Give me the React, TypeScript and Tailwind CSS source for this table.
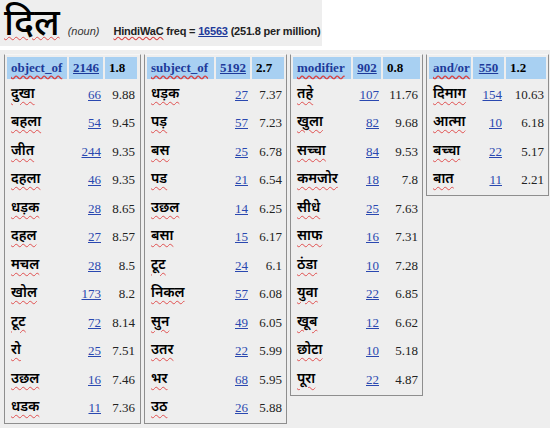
import React from 'react';

type Row = [string, number, string];
type Col = { rel: string; freq: number; score: string; width: string; cols: string; rows: Row[] };

const hindi = "'Noto Sans Devanagari','Lohit Devanagari','FreeSans','Mangal','Noto Sans',sans-serif";

const columns: Col[] = [
  {
    rel: 'object_of', freq: 2146, score: '1.8', width: 'w-[137px]', cols: 'grid-cols-[60px_34px_32px]',
    rows: [
      ['दुखा', 66, '9.88'], ['बहला', 54, '9.45'], ['जीत', 244, '9.35'], ['दहला', 46, '9.35'],
      ['धड़क', 28, '8.65'], ['दहल', 27, '8.57'], ['मचल', 28, '8.5'], ['खोल', 173, '8.2'],
      ['टूट', 72, '8.14'], ['रो', 25, '7.51'], ['उछल', 16, '7.46'], ['धडक', 11, '7.36'],
    ],
  },
  {
    rel: 'subject_of', freq: 5192, score: '2.7', width: 'w-[143px]', cols: 'grid-cols-[67px_34px_32px]',
    rows: [
      ['धड़क', 27, '7.37'], ['पड़', 57, '7.23'], ['बस', 25, '6.78'], ['पड', 21, '6.54'],
      ['उछल', 14, '6.25'], ['बसा', 15, '6.17'], ['टूट', 24, '6.1'], ['निकल', 57, '6.08'],
      ['सुन', 49, '6.05'], ['उतर', 22, '5.99'], ['भर', 68, '5.95'], ['उठ', 26, '5.88'],
    ],
  },
  {
    rel: 'modifier', freq: 902, score: '0.8', width: 'w-[133px]', cols: 'grid-cols-[58px_28px_37px]',
    rows: [
      ['तहे', 107, '11.76'], ['खुला', 82, '9.68'], ['सच्चा', 84, '9.53'], ['कमजोर', 18, '7.8'],
      ['सीधे', 25, '7.63'], ['साफ', 16, '7.31'], ['ठंडा', 10, '7.28'], ['युवा', 22, '6.85'],
      ['खूब', 12, '6.62'], ['छोटा', 10, '5.18'], ['पूरा', 22, '4.87'],
    ],
  },
  {
    rel: 'and/or', freq: 550, score: '1.2', width: 'w-[123px]', cols: 'grid-cols-[42px_31px_40px]',
    rows: [
      ['दिमाग', 154, '10.63'], ['आत्मा', 10, '6.18'], ['बच्चा', 22, '5.17'], ['बात', 11, '2.21'],
    ],
  },
];

function Panel({ col }: { col: Col }) {
  return (
    <div className={`${col.width} self-start border border-[#8e8e8e] border-t-[#f6f6f6] bg-[#eeeeee] p-[2px]`}>
      <div className={`grid ${col.cols} gap-x-[2px] gap-y-[2px] font-['Liberation_Serif',serif] text-[13px]`}>
        <div className="flex h-[22px] items-center bg-[#a8d0f2] pl-[4px] font-bold">
          <span className="text-[#1d3a9a] underline decoration-wavy decoration-[#d94040] underline-offset-2">{col.rel}</span>
        </div>
        <div className="flex h-[22px] items-center justify-center bg-[#a8d0f2] font-bold text-[#1d3a9a] underline">
          {col.freq}
        </div>
        <div className="flex h-[22px] items-center bg-[#a8d0f2] pl-[4px] font-bold text-black">{col.score}</div>
        {col.rows.map(([w, f, s], i) => (
          <React.Fragment key={i}>
            <div className="flex h-[26.5px] items-center pl-[4px]">
              <span
                style={{ fontFamily: hindi }}
                className="text-[14px] font-semibold text-black underline decoration-wavy decoration-[#e05050] decoration-1 underline-offset-[3px]"
              >
                {w}
              </span>
            </div>
            <div className="flex h-[26.5px] items-center justify-end pr-[2px] text-[#2a48b0] underline">{f}</div>
            <div className="flex h-[26.5px] items-center justify-end pr-[2px] text-[#222]">{s}</div>
          </React.Fragment>
        ))}
      </div>
    </div>
  );
}

export default function App() {
  return (
    <div className="h-[432px] w-[553px] bg-white">
      <div className="flex h-[46px] w-[322px] items-baseline whitespace-nowrap bg-[#eeeeee] pl-[4px] pt-[5px]">
        <span
          style={{ fontFamily: hindi }}
          className="text-[37px] font-medium leading-[42px] text-black underline decoration-wavy decoration-[#e05050] decoration-1 underline-offset-[1px]"
        >
          दिल
        </span>
        <span className="ml-[8px] font-['Liberation_Sans',sans-serif] text-[11px] italic text-[#333]">(noun)</span>
        <span className="ml-[14px] font-['Liberation_Sans',sans-serif] text-[11px] font-bold tracking-[-0.2px] text-[#222]">
          <span className="underline decoration-wavy decoration-[#d94040]">HindiWaC</span> freq ={' '}
          <span className="text-[#1d3a9a] underline">16563</span> (251.8 per million)
        </span>
      </div>
      <div className="mt-[4px] flex h-[378px] w-[550px] gap-[3px] bg-[#eeeeee] pl-[4px] pt-[4px]">
        {columns.map((c) => (
          <Panel key={c.rel} col={c} />
        ))}
      </div>
    </div>
  );
}
